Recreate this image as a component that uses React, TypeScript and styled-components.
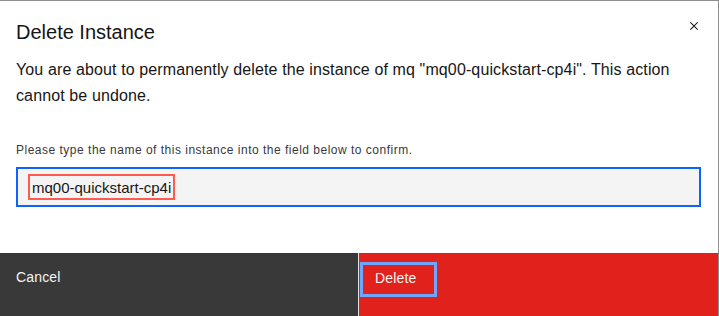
import * as React from "react";
import styled, { createGlobalStyle } from "styled-components";

const GlobalStyle = createGlobalStyle`
  html, body {
    margin: 0;
    padding: 0;
    background: #ffffff;
  }
  body {
    font-family: "Liberation Sans", Arial, sans-serif;
    -webkit-font-smoothing: antialiased;
  }
`;

/**
 * Confirmation modal for deleting an instance. The user has to retype the
 * instance name before the destructive action is allowed.
 */
function DeleteInstanceModal() {
  const instanceName = "mq00-quickstart-cp4i";
  const [value, setValue] = React.useState(instanceName);

  return (
    <Modal role="dialog" aria-labelledby="delete-title">
      <Header>
        <Title id="delete-title">Delete Instance</Title>
        <CloseButton aria-label="Close">
          <svg width="16" height="16" viewBox="0 0 32 32" fill="#161616">
            <path d="M24 9.4 22.6 8 16 14.6 9.4 8 8 9.4l6.6 6.6L8 22.6 9.4 24l6.6-6.6 6.6 6.6 1.4-1.4-6.6-6.6z" />
          </svg>
        </CloseButton>
      </Header>
      <Body>
        <Message>
          {`You are about to permanently delete the instance of mq "${instanceName}". This action cannot be undone.`}
        </Message>
        <Label htmlFor="confirm-name">
          Please type the name of this instance into the field below to confirm.
        </Label>
        <Field>
          <Highlight>
            <Input
              id="confirm-name"
              value={value}
              onChange={(event) => setValue(event.target.value)}
            />
          </Highlight>
        </Field>
      </Body>
      <Footer>
        <FooterButton $kind="secondary">Cancel</FooterButton>
        <FooterButton $kind="danger" disabled={value !== instanceName}>
          <FocusRing>Delete</FocusRing>
        </FooterButton>
      </Footer>
    </Modal>
  );
}

const Modal = styled.div`
  width: 718px;
  height: 315px;
  border-top: 1px solid #8d8d8d;
  border-right: 1px solid #8d8d8d;
  display: flex;
  flex-direction: column;
  background: #ffffff;
  color: #161616;
`;

const Header = styled.div`
  display: flex;
  align-items: flex-start;
  justify-content: space-between;
  padding: 17px 16px 0 16px;
`;

const Title = styled.h2`
  margin: 0;
  font-size: 20px;
  font-weight: 400;
  line-height: 28px;
`;

const CloseButton = styled.button`
  width: 48px;
  height: 48px;
  margin: -16px -16px 0 0;
  padding: 0;
  border: none;
  background: transparent;
  display: flex;
  align-items: center;
  justify-content: center;
  cursor: pointer;
`;

const Body = styled.div`
  flex: 1;
  padding: 7px 17px 0 16px;
`;

const Message = styled.p`
  margin: 0;
  font-size: 16px;
  line-height: 26px;
  letter-spacing: 0.12px;
  padding-right: 20px;
`;

const Label = styled.label`
  display: block;
  margin-top: 33px;
  font-size: 12px;
  line-height: 16px;
  letter-spacing: 0.5px;
  color: #393939;
`;

const Field = styled.div`
  margin-top: 9px;
  height: 40px;
  box-sizing: border-box;
  border: 2px solid #0f62fe;
  background: #f4f4f4;
  display: flex;
  align-items: center;
  padding-left: 10px;
`;

const Highlight = styled.span`
  display: inline-flex;
  align-items: center;
  height: 26px;
  box-sizing: border-box;
  border: 2px solid #ff5a4d;
  padding: 0 2px;
`;

const Input = styled.input`
  width: 139px;
  border: none;
  outline: none;
  background: transparent;
  padding: 0;
  font-family: inherit;
  font-size: 15px;
  color: #161616;
`;

const Footer = styled.div`
  display: flex;
  height: 63px;
`;

const FooterButton = styled.button<{ $kind: "secondary" | "danger" }>`
  flex: ${(props) => (props.$kind === "danger" ? "1 1 0" : "0 0 358px")};
  box-sizing: border-box;
  display: flex;
  align-items: flex-start;
  padding: 15px 16px;
  border: none;
  margin: 0;
  font-family: inherit;
  font-size: 14px;
  line-height: 18px;
  letter-spacing: 0.16px;
  color: #f4f4f4;
  text-align: left;
  cursor: pointer;
  background: ${(props) => (props.$kind === "danger" ? "#e1221c" : "#393939")};
  border-left: ${(props) =>
    props.$kind === "danger" ? "1px solid #e0e0e0" : "none"};
  padding-left: ${(props) => (props.$kind === "danger" ? "1px" : "16px")};

  &:disabled {
    cursor: not-allowed;
  }
`;

const FocusRing = styled.span`
  display: inline-block;
  margin-top: -6px;
  padding: 4px 18px 7px 12px;
  border: 3px solid #6ea6ff;
`;

export default function App() {
  return (
    <>
      <GlobalStyle />
      <DeleteInstanceModal />
    </>
  );
}
